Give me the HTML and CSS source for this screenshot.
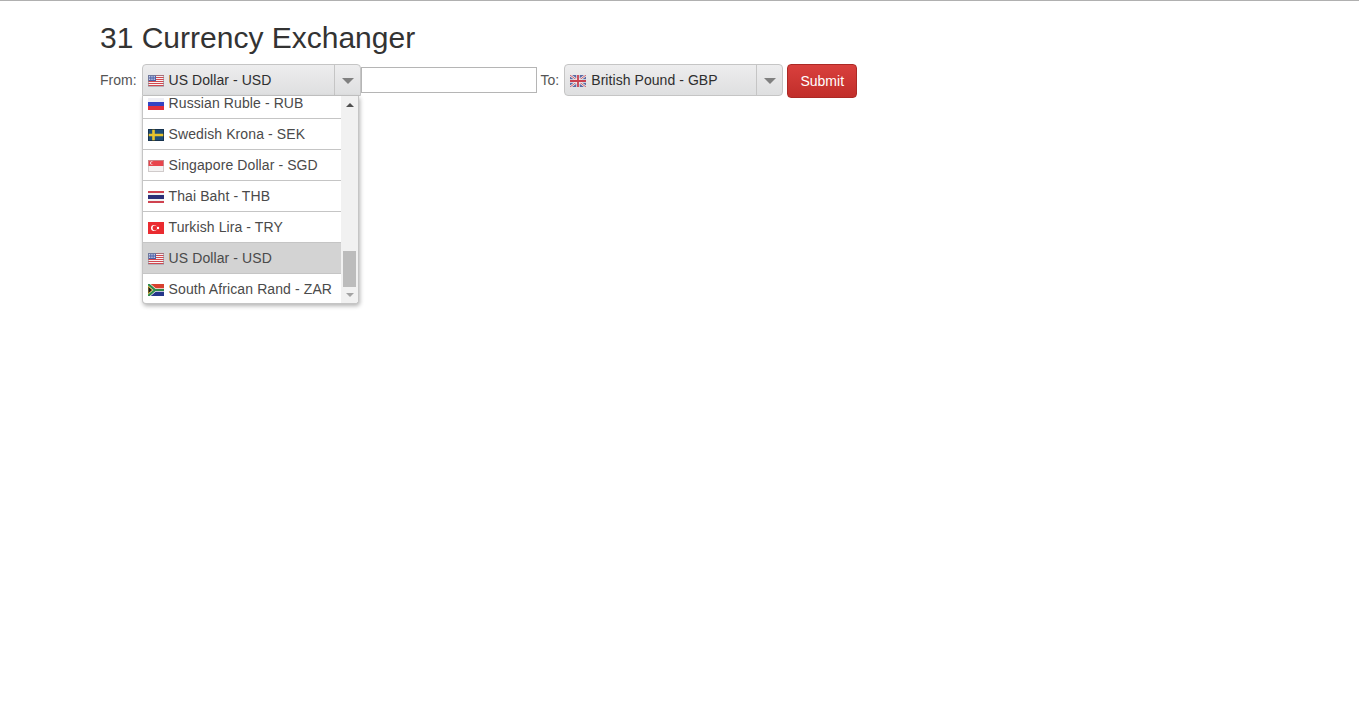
FILE: index.html
```html
<!DOCTYPE html>
<html lang="en">
<head>
    <meta charset="UTF-8">
    <meta name="viewport" content="width=device-width, initial-scale=1.0">
    <title>31 Currency Exchanger</title>
    <link rel="stylesheet" href="styles.css">
</head>
<body>
    <svg class="sprite" width="0" height="0">
        <symbol id="flag-us" viewBox="0 0 16 12">
            <rect width="16" height="12" fill="#f6f2f2"/>
            <path d="M0 .5h16M0 2.5h16M0 4.5h16M0 6.5h16M0 8.5h16M0 10.5h16" stroke="#d2474f" stroke-width="1"/>
            <rect x="0" y="0" width="8" height="6" fill="#4a5fa8"/>
            <path d="M1 1.5h6M1 3h6M1 4.5h6" stroke="#e6eaf6" stroke-width=".8" stroke-dasharray="1 .7"/>
            <rect x=".5" y=".5" width="15" height="11" fill="none" stroke="#8a8a96" stroke-opacity=".6"/>
        </symbol>
        <symbol id="flag-gb" viewBox="0 0 16 12">
            <rect width="16" height="12" fill="#5b6aa5"/>
            <path d="M0 0l16 12M16 0L0 12" stroke="#eee" stroke-width="2.4"/>
            <path d="M0 0l16 12M16 0L0 12" stroke="#c9505f" stroke-width=".9"/>
            <path d="M8 0v12M0 6h16" stroke="#eee" stroke-width="3.4"/>
            <path d="M8 0v12M0 6h16" stroke="#c9404f" stroke-width="1.8"/>
        </symbol>
        <symbol id="flag-ru" viewBox="0 0 16 12">
            <rect width="16" height="4" fill="#eeeef4"/>
            <rect y="4" width="16" height="4" fill="#3344c4"/>
            <rect y="8" width="16" height="4" fill="#e2303c"/>
        </symbol>
        <symbol id="flag-se" viewBox="0 0 16 12">
            <rect width="16" height="12" fill="#1f4f78"/>
            <path d="M5.5 0v12M0 6h16" stroke="#e8c42c" stroke-width="2.6"/>
            <rect x=".5" y=".5" width="15" height="11" fill="none" stroke="#14283c" stroke-opacity=".7"/>
        </symbol>
        <symbol id="flag-sg" viewBox="0 0 16 12">
            <rect width="16" height="6" fill="#e8454c"/>
            <rect y="6" width="16" height="6" fill="#f4f2f2"/>
            <circle cx="3.8" cy="3" r="1.8" fill="#f4f2f2"/>
            <circle cx="4.6" cy="3" r="1.6" fill="#e8454c"/>
            <rect x=".5" y=".5" width="15" height="11" fill="none" stroke="#b8b0b0" stroke-opacity=".6"/>
        </symbol>
        <symbol id="flag-th" viewBox="0 0 16 12">
            <rect width="16" height="12" fill="#cf4250"/>
            <rect y="2" width="16" height="8" fill="#f2f2f2"/>
            <rect y="4" width="16" height="4" fill="#2b2f78"/>
        </symbol>
        <symbol id="flag-tr" viewBox="0 0 16 12">
            <rect width="16" height="12" fill="#ea2b30"/>
            <circle cx="6" cy="6" r="3" fill="#fff"/>
            <circle cx="6.9" cy="6" r="2.4" fill="#ea2b30"/>
            <circle cx="10" cy="6" r="1.2" fill="#fff"/>
        </symbol>
        <symbol id="flag-za" viewBox="0 0 16 12">
            <rect width="16" height="6" fill="#d8402f"/>
            <rect y="6" width="16" height="6" fill="#24358a"/>
            <path d="M0 0l7 6-7 6M7 6h9" fill="none" stroke="#f2f2f2" stroke-width="3.6"/>
            <path d="M0 0l7 6-7 6M7 6h9" fill="none" stroke="#2f8a4a" stroke-width="2.2"/>
            <path d="M0 2.2L4.4 6 0 9.8z" fill="#1c1c1c" stroke="#e8bb30" stroke-width=".8"/>
        </symbol>
    </svg>

    <div class="container">
        <h1>31 Currency Exchanger</h1>
        <form class="exchange-form">
            <label>From:</label>
            <div class="picker picker-from">
                <div class="picker-value">
                    <svg class="flag"><use href="#flag-us"/></svg>
                    <span>US Dollar - USD</span>
                </div>
                <div class="picker-arrow"><span class="caret"></span></div>
                <div class="picker-popup">
                    <ul class="picker-list">
                        <li><svg class="flag"><use href="#flag-ru"/></svg>Russian Ruble - RUB</li>
                        <li><svg class="flag"><use href="#flag-se"/></svg>Swedish Krona - SEK</li>
                        <li><svg class="flag"><use href="#flag-sg"/></svg>Singapore Dollar - SGD</li>
                        <li><svg class="flag"><use href="#flag-th"/></svg>Thai Baht - THB</li>
                        <li><svg class="flag"><use href="#flag-tr"/></svg>Turkish Lira - TRY</li>
                        <li class="selected"><svg class="flag"><use href="#flag-us"/></svg>US Dollar - USD</li>
                        <li><svg class="flag"><use href="#flag-za"/></svg>South African Rand - ZAR</li>
                    </ul>
                    <div class="scrollbar">
                        <span class="scroll-up"></span>
                        <span class="scroll-thumb"></span>
                        <span class="scroll-down"></span>
                    </div>
                </div>
            </div>
            <input type="text" class="amount">
            <label>To:</label>
            <div class="picker picker-to">
                <div class="picker-value">
                    <svg class="flag"><use href="#flag-gb"/></svg>
                    <span>British Pound - GBP</span>
                </div>
                <div class="picker-arrow"><span class="caret"></span></div>
            </div>
            <button type="button" class="submit-btn">Submit</button>
        </form>
    </div>
</body>
</html>
```

FILE: styles.css
```css
html, body {
    height: 100%;
}
body {
    margin: 0;
    box-sizing: border-box;
    border-top: 1px solid #b0b0b0;
    font-family: "Liberation Sans", Arial, sans-serif;
    font-size: 14px;
    color: #333;
    background: #fff;
}
.sprite {
    display: block;
}
.container {
    padding: 0 100px;
}
h1 {
    margin: 20px 0 10px;
    font-size: 30px;
    font-weight: 400;
    line-height: 33px;
}
.exchange-form {
    display: flex;
    align-items: flex-start;
    height: 34px;
}
.exchange-form label {
    color: #555;
    margin-right: 5px;
    line-height: 32px;
}
.picker {
    position: relative;
    display: flex;
    height: 32px;
    box-sizing: border-box;
    border: 1px solid #c5c5c5;
    border-radius: 4px 4px 0 0;
    background: linear-gradient(#ededee, #dedfe0);
    color: #2e2e2e;
    letter-spacing: 0.06px;
}
.picker-from {
    width: 219px;
}
.picker-to {
    width: 219px;
    margin-right: 4px;
    border-radius: 4px;
}
.picker-value {
    flex: 1;
    display: flex;
    align-items: center;
    padding-left: 5px;
}
.flag {
    flex: none;
    width: 16px;
    height: 12px;
    margin: 1px 5px 0 0;
}
.picker-arrow {
    flex: none;
    width: 25px;
    display: flex;
    align-items: center;
    justify-content: center;
    border-left: 1px solid #c5c5c5;
}
.caret {
    width: 0;
    height: 0;
    margin: 1px 0 0 1px;
    border-left: 6px solid transparent;
    border-right: 6px solid transparent;
    border-top: 6px solid #808080;
}
.picker-popup {
    position: absolute;
    z-index: 10;
    left: -1px;
    top: 31px;
    width: 217px;
    height: 208px;
    box-sizing: border-box;
    display: flex;
    overflow: hidden;
    background: #fff;
    border: 1px solid #c5c5c5;
    border-top: 0;
    border-radius: 0 0 4px 4px;
    box-shadow: 1px 2px 4px rgba(0, 0, 0, 0.3);
    letter-spacing: 0.1px;
}
.picker-list {
    flex: 1;
    list-style: none;
    margin: -8px 0 0;
    padding: 0;
    color: #4a4a4a;
}
.picker-list li {
    height: 31px;
    box-sizing: border-box;
    padding-left: 5px;
    display: flex;
    align-items: center;
    border-bottom: 1px solid #c5c5c5;
}
.picker-list li:last-child {
    border-bottom-color: transparent;
}
.picker-list li.selected {
    background: #d3d3d3;
}
.scrollbar {
    position: relative;
    flex: none;
    width: 17px;
    background: #f1f1f1;
}
.scroll-up, .scroll-down {
    position: absolute;
    left: 5px;
    width: 0;
    height: 0;
    border-left: 4px solid transparent;
    border-right: 4px solid transparent;
}
.scroll-up {
    top: 7px;
    border-bottom: 4px solid #505050;
}
.scroll-down {
    bottom: 6px;
    border-top: 4px solid #a3a3a3;
}
.scroll-thumb {
    position: absolute;
    left: 2px;
    top: 155px;
    width: 13px;
    height: 36px;
    background: #bcbcbc;
}
.amount {
    width: 176px;
    height: 26px;
    box-sizing: border-box;
    margin: 3px 4px 0 0;
    padding: 0 4px;
    border: 1px solid #b5b5b5;
    font: inherit;
}
.submit-btn {
    width: 70px;
    height: 34px;
    padding: 0;
    border: 1px solid #ac2925;
    border-radius: 4px;
    background: linear-gradient(#d9403d, #c12e2a);
    color: #fff;
    font: inherit;
}
```
